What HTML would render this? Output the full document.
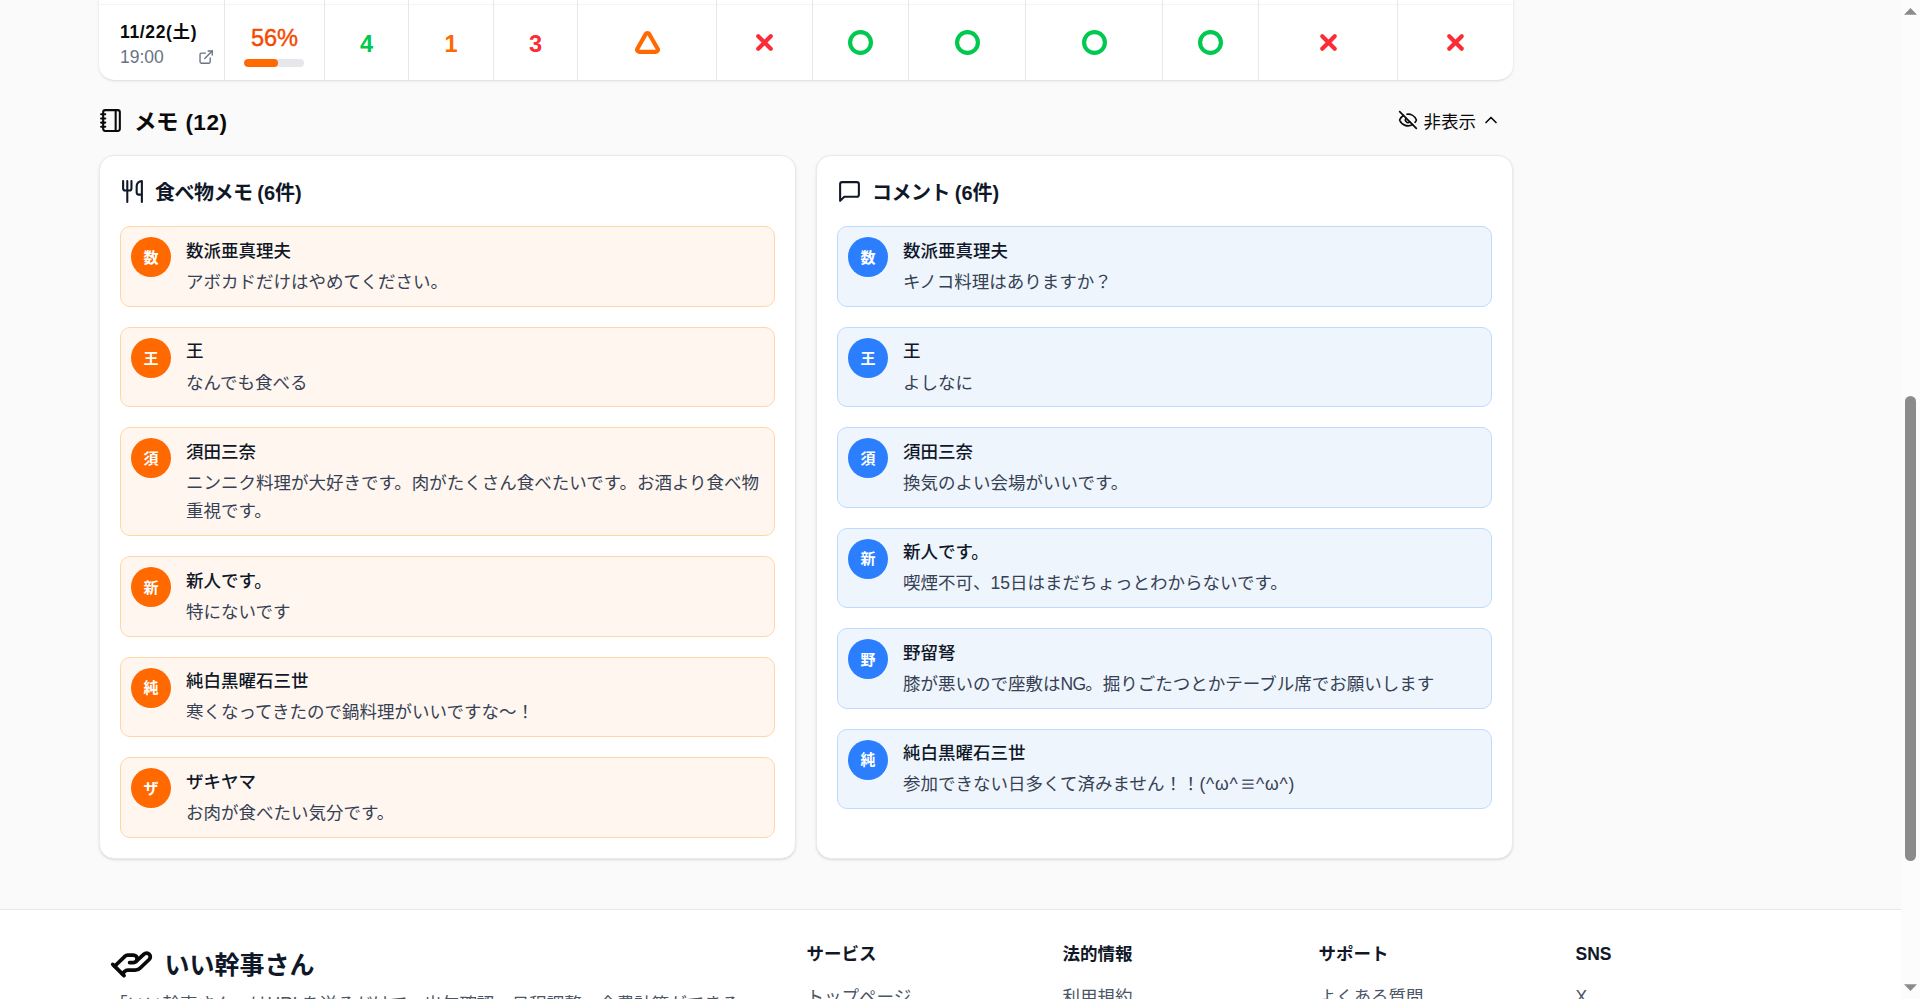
<!DOCTYPE html>
<html lang="ja">
<head>
<meta charset="utf-8">
<title>いい幹事さん</title>
<style>
*{box-sizing:border-box;margin:0;padding:0}
html,body{width:1920px;height:999px;overflow:hidden;background:#fafafa}
body{font-family:"Liberation Sans","Noto Sans CJK JP",sans-serif;color:#101828;-webkit-font-smoothing:antialiased}
#page{position:relative;width:1920px;height:999px;overflow:hidden;background:#fafafa}
svg.ic{display:block;fill:none;stroke:currentColor;stroke-width:2;stroke-linecap:round;stroke-linejoin:round}

/* ---------- schedule table (bottom row only visible) ---------- */
#tbl{position:absolute;left:99px;top:-60px;width:1414px;height:140px;background:#fff;border:0;border-radius:0 0 15px 15px;box-shadow:0 1px 3px rgba(0,0,0,.10),0 1px 2px -1px rgba(0,0,0,.10);overflow:hidden}
#tbl .in{position:absolute;left:1px;top:1px;right:0;bottom:0}
#tbl .hline{position:absolute;left:-1px;top:63px;width:1414px;height:1px;background:#f3f4f6}
#tbl .v{position:absolute;top:0;width:1px;height:140px;background:#e5e7eb}
.cell{position:absolute;top:64px;height:75px;display:flex;align-items:center;justify-content:center}
.num{font-size:23.6px;font-weight:700;line-height:35px;position:relative;top:2px}
.g{color:#00c950}.o{color:#ff6900}.r{color:#fb2c36}


.datec{justify-content:flex-start;padding-left:20px}
.dt{position:relative;top:2.1px}
.dt .d1{font-size:17.5px;line-height:25px;font-weight:700;color:#0a0a0a;white-space:nowrap;letter-spacing:.65px}
.dt .d2{font-size:17.5px;line-height:25px;color:#6a7282}
.ext{position:absolute;left:98.3px;top:44.2px;color:#6a7282}
.pc{display:flex;flex-direction:column;align-items:center}
.pv{font-size:23.6px;line-height:35px;font-weight:400;color:#f54900;-webkit-text-stroke:.4px #f54900;position:relative;top:2.5px}
.bar{width:60px;height:8px;margin-top:5.5px;margin-left:-1px;border-radius:4px;background:#e5e7eb;overflow:hidden}
.bar i{display:block;width:56%;height:100%;background:#ff6900;border-radius:4px}

/* ---------- memo heading ---------- */
#mh{position:absolute;left:99px;top:98px;width:1414px;height:45px;display:flex;align-items:center;justify-content:space-between}
#mh h2{letter-spacing:-.025em;display:flex;align-items:center;gap:10px;font-size:22.5px;line-height:35px;font-weight:700;color:#0a0a0a}
#mh .btn{display:flex;align-items:center;gap:5px;font-size:17.5px;line-height:25px;font-weight:400;color:#0a0a0a;margin-right:12px;margin-top:-1px}
#mh .btn svg:first-child{margin-right:1px}
#mh div.btn span{top:calc(.09em + 1px)}
.kao{letter-spacing:.8px}
.eq{display:inline-block;width:17.5px;text-align:center;font-size:23px;line-height:20px;letter-spacing:0;position:relative;top:1.2px;left:.6px;opacity:.82}
b.l{font-weight:inherit;letter-spacing:.5px;margin-left:1.8px}
b.l2{font-weight:inherit;letter-spacing:-.05px;margin-left:-.3px}

/* ---------- cards ---------- */
.card{position:absolute;top:155.47px;width:697px;height:703.53px;background:#fff;border:1px solid #e9eaed;border-radius:15px;box-shadow:0 1px 3px rgba(0,0,0,.10),0 1px 2px -1px rgba(0,0,0,.10);padding:20px}
.card h3 span,#mh h2 span,#mh .btn span,#ft .logo span,#ft h4,#ft a,#ft .desc{position:relative;top:.09em}
.card h3{letter-spacing:-.025em;display:flex;align-items:center;gap:10px;font-size:20px;line-height:30px;font-weight:700;color:#101828;margin-bottom:20px}
.it{display:flex;gap:15px;align-items:flex-start;padding:10px;border:1px solid;border-radius:10px;margin-bottom:20px}
.food .it{background:#fff6f0;border-color:#ffd6a7}
.cmt .it{background:#eef5fd;border-color:#bedbff}
.av{flex:none;width:40px;height:40px;border-radius:50%;display:flex;align-items:center;justify-content:center;color:#fff;font-size:15px;font-weight:700;line-height:20px}
.av span{position:relative;top:.6px}
.food .av{background:#ff6900}
.cmt .av{background:#2b7fff}
.nm{position:relative;top:.09em;font-size:17.5px;line-height:25px;font-weight:500;color:#101828}
.tx{position:relative;top:calc(.09em - .9px);font-size:17.5px;line-height:28.4375px;color:#364153;margin-top:5px}

/* ---------- footer ---------- */
#ft{position:absolute;left:0;top:909px;width:1901px;height:90px;background:#fff;border-top:1px solid #e5e7eb}
#ft .logo{position:absolute;left:109px;top:30px;display:flex;align-items:center;gap:10px;font-size:25px;line-height:35px;font-weight:700;color:#101828}
#ft .desc{position:absolute;left:110px;top:80px;font-size:17.5px;line-height:28.4375px;color:#4a5565;white-space:nowrap}
#ft .logo svg{color:#0a0a0a}
#ft div.logo span{top:calc(.09em + 1px);left:.6px}
#ft .col{position:absolute;top:30px;margin-left:-.5px}
#ft .col h4{font-size:17.5px;line-height:25px;font-weight:700;color:#101828}
#ft .col a{display:block;margin-top:18px;font-size:17.5px;line-height:25px;color:#4a5565;text-decoration:none}

/* ---------- fake scrollbar ---------- */
#sb{position:absolute;left:1901px;top:0;width:19px;height:999px;background:#fcfcfc}
#sb .th{position:absolute;left:4px;top:396px;width:11px;height:465px;border-radius:5.5px;background:#8b8b8b}
#sb svg{position:absolute;left:0;display:block}
</style>
</head>
<body>
<div id="page">

<div id="tbl"><div class="in">
  <div class="hline"></div>
  <div class="v" style="left:124px"></div>
  <div class="v" style="left:224px"></div>
  <div class="v" style="left:308px"></div>
  <div class="v" style="left:393px"></div>
  <div class="v" style="left:477px"></div>
  <div class="v" style="left:616px"></div>
  <div class="v" style="left:712px"></div>
  <div class="v" style="left:808px"></div>
  <div class="v" style="left:925px"></div>
  <div class="v" style="left:1062px"></div>
  <div class="v" style="left:1158px"></div>
  <div class="v" style="left:1297px"></div>
  <div class="cell datec" style="left:0px;width:124px"><div class="dt"><div class="d1">11/22(土)</div><div class="d2">19:00</div></div><svg class="ic ext" width="16.25" height="16.25" viewBox="0 0 24 24"><path d="M15 3h6v6"/><path d="M10 14 21 3"/><path d="M18 13v6a2 2 0 0 1-2 2H5a2 2 0 0 1-2-2V8a2 2 0 0 1 2-2h6"/></svg></div>
  <div class="cell" style="left:125px;width:99px"><div class="pc"><div class="pv">56%</div><div class="bar"><i></i></div></div></div>
  <div class="cell" style="left:225px;width:83px"><span class="num g">4</span></div>
  <div class="cell" style="left:309px;width:84px"><span class="num o">1</span></div>
  <div class="cell" style="left:394px;width:83px"><span class="num r">3</span></div>
  <div class="cell" style="left:478px;width:138px"><svg class="ic o" width="25" height="25" viewBox="0 0 24 24" style="stroke-width:4"><path d="M13.73 4a2 2 0 0 0-3.46 0l-8 14A2 2 0 0 0 4 21h16a2 2 0 0 0 1.73-3Z"/></svg></div>
  <div class="cell" style="left:617px;width:95px"><svg class="ic r" width="25" height="25" viewBox="0 0 24 24" style="stroke-width:4"><path d="M18 6 6 18"/><path d="m6 6 12 12"/></svg></div>
  <div class="cell" style="left:713px;width:95px"><svg class="ic g" width="25" height="25" viewBox="0 0 24 24" style="stroke-width:4"><circle cx="12" cy="12" r="10"/></svg></div>
  <div class="cell" style="left:809px;width:116px"><svg class="ic g" width="25" height="25" viewBox="0 0 24 24" style="stroke-width:4"><circle cx="12" cy="12" r="10"/></svg></div>
  <div class="cell" style="left:926px;width:136px"><svg class="ic g" width="25" height="25" viewBox="0 0 24 24" style="stroke-width:4"><circle cx="12" cy="12" r="10"/></svg></div>
  <div class="cell" style="left:1063px;width:95px"><svg class="ic g" width="25" height="25" viewBox="0 0 24 24" style="stroke-width:4"><circle cx="12" cy="12" r="10"/></svg></div>
  <div class="cell" style="left:1159px;width:138px"><svg class="ic r" width="25" height="25" viewBox="0 0 24 24" style="stroke-width:4"><path d="M18 6 6 18"/><path d="m6 6 12 12"/></svg></div>
  <div class="cell" style="left:1298px;width:115px"><svg class="ic r" width="25" height="25" viewBox="0 0 24 24" style="stroke-width:4"><path d="M18 6 6 18"/><path d="m6 6 12 12"/></svg></div>
</div></div>

<div id="mh">
  <h2><svg class="ic" width="25" height="25" viewBox="0 0 24 24"><path d="M2 6h4"/><path d="M2 10h4"/><path d="M2 14h4"/><path d="M2 18h4"/><rect width="16" height="20" x="4" y="2" rx="2"/><path d="M16 2v20"/></svg><span>メモ <b class="l">(12)</b></span></h2>
  <div class="btn"><svg class="ic" width="20" height="20" viewBox="0 0 24 24"><path d="M10.733 5.076a10.744 10.744 0 0 1 11.205 6.575 1 1 0 0 1 0 .696 10.747 10.747 0 0 1-1.444 2.49"/><path d="M14.084 14.158a3 3 0 0 1-4.242-4.242"/><path d="M17.479 17.499a10.75 10.75 0 0 1-15.417-5.151 1 1 0 0 1 0-.696 10.75 10.75 0 0 1 4.446-5.143"/><path d="m2 2 20 20"/></svg><span>非表示</span><svg class="ic" width="20" height="20" viewBox="0 0 24 24"><path d="m18 15-6-6-6 6"/></svg></div>
</div>

<div class="card food" style="left:99px">
  <h3><svg class="ic" width="25" height="25" viewBox="0 0 24 24"><path d="M3 2v7c0 1.1.9 2 2 2h4a2 2 0 0 0 2-2V2"/><path d="M7 2v20"/><path d="M21 15V2a5 5 0 0 0-5 5v6c0 1.1.9 2 2 2h3Zm0 0v7"/></svg><span>食べ物メモ <b class="l2">(6件)</b></span></h3>
  <div class="it"><div class="av"><span>数</span></div><div class="bd"><div class="nm">数派亜真理夫</div><div class="tx">アボカドだけはやめてください。</div></div></div>
  <div class="it"><div class="av"><span>王</span></div><div class="bd"><div class="nm">王</div><div class="tx">なんでも食べる</div></div></div>
  <div class="it"><div class="av"><span>須</span></div><div class="bd"><div class="nm">須田三奈</div><div class="tx">ニンニク料理が大好きです。肉がたくさん食べたいです。お酒より食べ物重視です。</div></div></div>
  <div class="it"><div class="av"><span>新</span></div><div class="bd"><div class="nm">新人です。</div><div class="tx">特にないです</div></div></div>
  <div class="it"><div class="av"><span>純</span></div><div class="bd"><div class="nm">純白黒曜石三世</div><div class="tx">寒くなってきたので鍋料理がいいですな～！</div></div></div>
  <div class="it"><div class="av"><span>ザ</span></div><div class="bd"><div class="nm">ザキヤマ</div><div class="tx">お肉が食べたい気分です。</div></div></div>
</div>
<div class="card cmt" style="left:816px">
  <h3><svg class="ic" width="25" height="25" viewBox="0 0 24 24"><path d="M21 15a2 2 0 0 1-2 2H7l-4 4V5a2 2 0 0 1 2-2h14a2 2 0 0 1 2 2z"/></svg><span>コメント <b class="l2">(6件)</b></span></h3>
  <div class="it"><div class="av"><span>数</span></div><div class="bd"><div class="nm">数派亜真理夫</div><div class="tx">キノコ料理はありますか？</div></div></div>
  <div class="it"><div class="av"><span>王</span></div><div class="bd"><div class="nm">王</div><div class="tx">よしなに</div></div></div>
  <div class="it"><div class="av"><span>須</span></div><div class="bd"><div class="nm">須田三奈</div><div class="tx">換気のよい会場がいいです。</div></div></div>
  <div class="it"><div class="av"><span>新</span></div><div class="bd"><div class="nm">新人です。</div><div class="tx">喫煙不可、15日はまだちょっとわからないです。</div></div></div>
  <div class="it"><div class="av"><span>野</span></div><div class="bd"><div class="nm">野留弩</div><div class="tx">膝が悪いので座敷は<span style="letter-spacing:-.7px">NG</span>。掘りごたつとかテーブル席でお願いします</div></div></div>
  <div class="it"><div class="av"><span>純</span></div><div class="bd"><div class="nm">純白黒曜石三世</div><div class="tx">参加できない日多くて済みません！！<span class="kao">(^ω^<span class="eq">≡</span>^ω^)</span></div></div></div>
</div>

<div id="ft">
  <div class="logo"><svg class="ic" width="45" height="45" viewBox="0 0 24 24"><path d="M11 12h2a2 2 0 1 0 0-4h-3c-.6 0-1.1.2-1.4.6L3 14"/><path d="m7 18 1.6-1.4c.3-.4.8-.6 1.4-.6h4c1.1 0 2.1-.4 2.8-1.2l4.6-4.4a2 2 0 0 0-2.75-2.91l-4.2 3.9"/><path d="m2 13 6 6"/></svg><span>いい幹事さん</span></div>
  <div class="desc">「いい幹事さん」はURLを送るだけで、出欠確認・日程調整・会費計算ができる</div>
  <div class="col" style="left:807px"><h4>サービス</h4><a>トップページ</a></div>
  <div class="col" style="left:1063px"><h4>法的情報</h4><a>利用規約</a></div>
  <div class="col" style="left:1319px"><h4>サポート</h4><a>よくある質問</a></div>
  <div class="col" style="left:1576px"><h4>SNS</h4><a>X</a></div>
</div>

<div id="sb">
  <svg width="19" height="20" style="top:0" viewBox="0 0 19 20"><path d="M3 14.8 L9.5 8 L16 14.8 Z" fill="#8b8b8b"/></svg>
  <div class="th"></div>
  <svg width="19" height="20" style="top:979px" viewBox="0 0 19 20"><path d="M3 5.2 L9.5 12 L16 5.2 Z" fill="#8b8b8b"/></svg>
</div>

</div>
</body>
</html>
